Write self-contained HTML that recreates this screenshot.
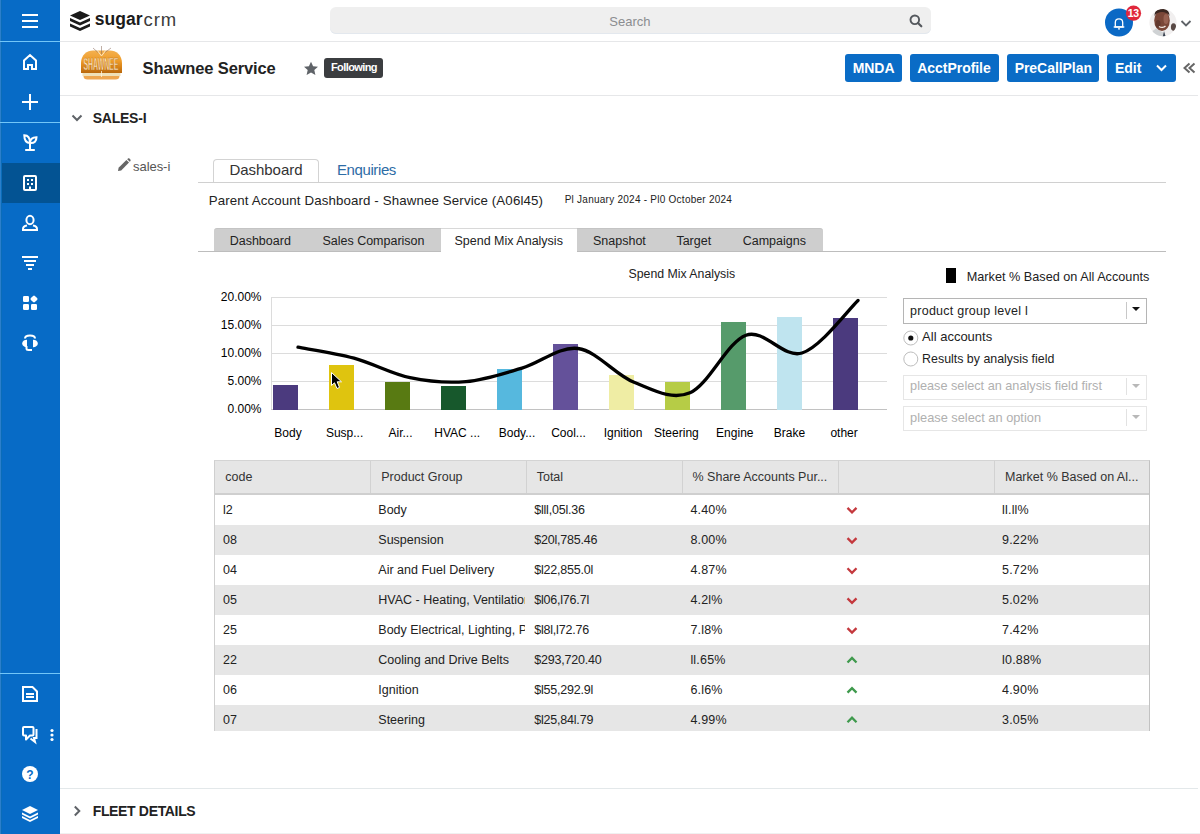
<!DOCTYPE html>
<html><head><meta charset="utf-8">
<style>
*{margin:0;padding:0;box-sizing:border-box}
html,body{width:1200px;height:834px;overflow:hidden;background:#fff;font-family:"Liberation Sans",sans-serif;color:#222;position:relative}
.a{position:absolute}
.t{position:absolute;white-space:nowrap;line-height:1}
</style></head><body>
<div class="a" style="left:0px;top:0px;width:60px;height:834px;background:#076bc6"></div>
<div class="a" style="left:0px;top:163px;width:60px;height:40px;background:#035393"></div>
<div class="a" style="left:0px;top:0px;width:1px;height:834px;background:#2b7fcb"></div>
<div class="a" style="left:1px;top:0px;width:1px;height:834px;background:#0a6cb8"></div>
<div class="a" style="left:0px;top:41px;width:60px;height:1px;background:#72c6f8"></div>
<div class="a" style="left:0px;top:122px;width:60px;height:1px;background:#72c6f8"></div>
<div class="a" style="left:0px;top:673px;width:60px;height:1px;background:#72c6f8"></div>
<svg class="a" style="left:0;top:0" width="60" height="834">
 <g stroke="#fff" stroke-width="2" fill="none" stroke-linecap="butt" stroke-linejoin="miter">
  <path d="M22,15H38M22,21H38M22,27H38"/>
  <path d="M24,69V60.5L30,55L36,60.5V69H32V65H28V69Z"/>
  <path d="M22,102H38M30,94V110"/>
  <path d="M30,150V143M25.2,150H34.8"/>
  <path d="M30,143C25.5,143 24.3,139.5 24.3,135.3C28,135.3 30,138 30,143Z"/>
  <path d="M30,143C30,139.5 32,137.3 36.5,137.3C36.5,141 34.5,143.5 30,143Z"/>
  <rect x="24" y="176" width="12" height="14" rx="1"/>
  <path d="M30,186.5V190"/>
  <ellipse cx="30" cy="220" rx="3.6" ry="4.2"/>
  <path d="M27,225.5C24,226 23,227.5 23,229V230H37V229C37,227.5 36,226 33,225.5"/>
  <path d="M22,257H38M24,261H36M26,265H34M28,269H32"/>
  <path d="M25,338.5C25,336.5 27,335.5 30,335.5C33,335.5 35,336.5 35,338.5"/>
  <path d="M26.5,346V348.5C26.5,349.5 27.5,350 28.5,350H32"/>
  <path d="M23,687H32.5L37,691.5V701H23Z"/>
  <path d="M26,694H34M26,697H34"/>
  <path d="M24,727H32.5Q33.5,727 33.5,728V734.5Q33.5,735.5 32.5,735.5H30L26,739.5V735.5H24Q23,735.5 23,734.5V728Q23,727 24,727Z" stroke-linejoin="round"/>
  <path d="M36.5,729V738H34L35,742L30.5,738.5"/>
 </g>
 <g fill="#fff">
  <rect x="27" y="179" width="2" height="2"/><rect x="31" y="179" width="2" height="2"/>
  <rect x="27" y="183" width="2" height="2"/><rect x="31" y="183" width="2" height="2"/>
  <rect x="23" y="296" width="6" height="6" rx="1.3"/>
  <path d="M33.1,295.9Q34,295 34.9,295.9L37.1,298.1Q38,299 37.1,299.9L34.9,302.1Q34,303 33.1,302.1L30.9,299.9Q30,299 30.9,298.1Z"/>
  <rect x="23" y="304" width="6" height="6" rx="1.3"/>
  <rect x="31" y="304" width="6" height="6" rx="1.3"/>
  <path d="M27,339.8V347.2C24,347.2 22.2,345.5 22.2,343.5C22.2,341.5 24,339.8 27,339.8Z"/>
  <path d="M33,339.8V347.2C36,347.2 37.8,345.5 37.8,343.5C37.8,341.5 36,339.8 33,339.8Z"/>
  <circle cx="52" cy="730.5" r="1.6"/><circle cx="52" cy="735" r="1.6"/><circle cx="52" cy="739.5" r="1.6"/>
  <circle cx="30" cy="774" r="8"/>
  <path d="M30,806L38,810L30,814L22,810Z"/>
  <path d="M22,812.5L30,816.5L38,812.5V814.5L30,818.5L22,814.5Z"/>
  <path d="M22,816L30,820L38,816V818L30,822L22,818Z"/>
 </g>
 <text x="30" y="778.5" font-family="Liberation Sans" font-weight="bold" font-size="12" fill="#076bc6" text-anchor="middle">?</text>
</svg>
<div class="a" style="left:60px;top:41px;width:1140px;height:1px;background:#e6e7e9"></div>
<svg class="a" style="left:68px;top:9px" width="26" height="24" viewBox="0 0 26 24">
 <path d="M12,2L22,6.5L12,11L2,6.5Z" fill="#1b1b1b"/>
 <path d="M2,9L12,13.5L22,9V12L12,16.5L2,12Z" fill="#1b1b1b"/>
 <path d="M2,14.5L12,19L22,14.5V17.5L12,22L2,17.5Z" fill="#1b1b1b"/>
</svg>
<div class="t" style="left:94.80px;top:11.39px;font-size:17.5px;color:#1b1b1b;font-weight:bold;letter-spacing:0px;">sugar</div>
<div class="t" style="left:143.50px;top:10.54px;font-size:18.5px;color:#3c3c3c;font-weight:normal;letter-spacing:0.9px;">crm</div>
<div class="a" style="left:330px;top:7px;width:601px;height:27px;background:#efefef;border-radius:6px;box-shadow:inset 0 -1px 0 #e3e8ee"></div>
<div class="t" style="left:609.30px;top:14.70px;font-size:13px;color:#8b8d90;font-weight:normal;letter-spacing:0px;">Search</div>
<svg class="a" style="left:907px;top:12px" width="18" height="18"><circle cx="7.8" cy="7.8" r="4.3" fill="none" stroke="#54585d" stroke-width="1.9"/><path d="M11,11L14.3,14.3" stroke="#54585d" stroke-width="2.2" stroke-linecap="round"/></svg>
<svg class="a" style="left:1100px;top:0" width="100" height="41">
 <circle cx="19" cy="22.5" r="14" fill="#0b69c5"/>
 <path d="M15.3,26.8V22.5C15.3,20.1 17,18.8 19,18.8C21,18.8 22.7,20.1 22.7,22.5V26.8Z" fill="none" stroke="#fff" stroke-width="1.3" stroke-linejoin="round"/>
 <path d="M14.2,27H23.8" stroke="#fff" stroke-width="1.3" stroke-linecap="round"/>
 <path d="M18,28.8H20" stroke="#fff" stroke-width="1.2"/>
 <circle cx="33.5" cy="13.2" r="7.6" fill="#e0283c"/>
 <text x="33.3" y="17" font-family="Liberation Sans" font-weight="bold" font-size="10.5" fill="#fff" text-anchor="middle" letter-spacing="-0.3">13</text>
 <defs><clipPath id="av"><circle cx="63" cy="22.7" r="13.6"/></clipPath></defs>
 <g clip-path="url(#av)">
  <rect x="48" y="8" width="30" height="30" fill="#f1efef"/>
  <ellipse cx="73.5" cy="27" rx="2.6" ry="3.8" fill="#3e2c27" opacity="0.85"/>
  <path d="M50,33L56,28.5L64,33L67,38H50Z" fill="#cfd2d4"/>
  <path d="M64,31L66,38H62.5Z" fill="#3a4250"/>
  <ellipse cx="62" cy="20.5" rx="7.8" ry="10.5" fill="#7a4738"/>
  <path d="M54.5,16C54.5,10.5 58,9 62,9C66,9 69.5,10.5 69.5,16C68,13 65,12 62,12C59,12 56,13 54.5,16Z" fill="#3a2620"/>
  <ellipse cx="66" cy="19" rx="2.5" ry="5" fill="#b07868" opacity="0.55"/>
  <ellipse cx="58" cy="24" rx="2.5" ry="4" fill="#4a2820" opacity="0.5"/>
  <path d="M59,26.5C61,27.8 64,27.5 65.5,26" stroke="#efe6e0" stroke-width="1.4" fill="none"/>
 </g>
 <path d="M81.5,21L86,25.5L90.5,21" fill="none" stroke="#5f6368" stroke-width="1.8"/>
</svg>
<div class="a" style="left:60px;top:95px;width:1138px;height:1px;background:#e6e7e9"></div>
<svg class="a" style="left:78px;top:44px" width="48" height="38" viewBox="0 0 48 38">
 <defs><linearGradient id="lg" x1="0" y1="0" x2="0" y2="1">
  <stop offset="0" stop-color="#f3b050"/><stop offset="0.45" stop-color="#ef9d2a"/><stop offset="0.72" stop-color="#d98418"/><stop offset="1" stop-color="#b9670c"/></linearGradient></defs>
 <path d="M3,29V19C3,11 9,6.5 15,6.5H32C38,6.5 44,11 44,19V29Z" fill="url(#lg)"/>
 <path d="M4.5,29H42.5V32H4.5Z" fill="#efe0b8"/>
 <path d="M5.5,32H41.5C41.5,34.5 40,35.5 37.5,35.5H9.5C7,35.5 5.5,34.5 5.5,32Z" fill="#eea650"/>
 <path d="M15,4L20,8.5M33,4L27,8.5M23.5,2V10" stroke="#8a6a5a" stroke-width="0.9" fill="none" opacity="0.6"/>
 <path d="M19,6L23.5,12L28,6" stroke="#fbe7c6" stroke-width="1" fill="none"/>
 <text x="0" y="0" font-family="Liberation Sans" font-size="17" font-weight="bold" fill="#fde4bd" stroke="#b87020" stroke-width="0.5" transform="translate(5.5,25.5) scale(0.405,1)">SHAWNEE</text>
 <path d="M23.5,27V33" stroke="#fff3dc" stroke-width="0.8"/>
</svg>
<div class="t" style="left:142.60px;top:59.83px;font-size:16.5px;color:#222;font-weight:bold;letter-spacing:-0.12px;">Shawnee Service</div>
<svg class="a" style="left:303px;top:61px" width="16" height="15" viewBox="0 0 16 15"><path d="M8,0.8L10.1,5.3L15,5.8L11.3,9.1L12.4,14L8,11.5L3.6,14L4.7,9.1L1,5.8L5.9,5.3Z" fill="#5f6368"/></svg>
<div class="a" style="left:324px;top:58px;width:59px;height:20px;background:#3b3d40;border-radius:3px"></div>
<div class="t" style="left:331.00px;top:62.39px;font-size:11px;color:#fff;font-weight:bold;letter-spacing:-0.6px;">Following</div>
<div class="a" style="left:845px;top:54px;width:57px;height:28px;background:#0a6cc6;border-radius:3px"></div>
<div class="t" style="left:852.70px;top:61.05px;font-size:14px;color:#fff;font-weight:bold;letter-spacing:-0.05px;">MNDA</div>
<div class="a" style="left:910px;top:54px;width:89px;height:28px;background:#0a6cc6;border-radius:3px"></div>
<div class="t" style="left:917.30px;top:61.05px;font-size:14px;color:#fff;font-weight:bold;letter-spacing:-0.05px;">AcctProfile</div>
<div class="a" style="left:1007px;top:54px;width:92px;height:28px;background:#0a6cc6;border-radius:3px"></div>
<div class="t" style="left:1014.70px;top:61.05px;font-size:14px;color:#fff;font-weight:bold;letter-spacing:-0.05px;">PreCallPlan</div>
<div class="a" style="left:1107px;top:54px;width:69px;height:28px;background:#0a6cc6;border-radius:3px"></div>
<div class="t" style="left:1115.00px;top:61.05px;font-size:14px;color:#fff;font-weight:bold;letter-spacing:-0.05px;">Edit</div>
<svg class="a" style="left:1150px;top:60px" width="50" height="20">
 <path d="M7,5.5L11.5,10L16,5.5" fill="none" stroke="#fff" stroke-width="2"/>
 <path d="M39.5,3.5L34.5,8L39.5,12.5M44.5,3.5L39.5,8L44.5,12.5" fill="none" stroke="#666" stroke-width="2"/>
</svg>
<svg class="a" style="left:70px;top:112px" width="14" height="12"><path d="M2.5,3.5L7,8L11.5,3.5" fill="none" stroke="#5f6368" stroke-width="2"/></svg>
<div class="t" style="left:92.70px;top:110.85px;font-size:14px;color:#222;font-weight:bold;letter-spacing:-0.23px;">SALES-I</div>
<svg class="a" style="left:117px;top:158px" width="14" height="14" viewBox="0 0 14 14"><path d="M1,13L1.6,9.8L9.4,2L12,4.6L4.2,12.4Z" fill="#666"/><path d="M10.2,1.2L11,0.6C11.5,0.2 12,0.2 12.4,0.6L13.4,1.6C13.8,2 13.8,2.5 13.4,3L12.8,3.8Z" fill="#666"/></svg>
<div class="t" style="left:133.00px;top:160.25px;font-size:13px;color:#555;font-weight:normal;letter-spacing:-0.05px;">sales-i</div>
<div class="a" style="left:213px;top:159px;width:106px;height:24px;border:1px solid #d3d3d3;border-bottom:none;border-radius:4px 4px 0 0;background:#fff"></div>
<div class="a" style="left:198px;top:182px;width:968px;height:1px;background:#d0d0d0"></div>
<div class="t" style="left:229.50px;top:161.55px;font-size:15px;color:#333;font-weight:normal;letter-spacing:-0.05px;">Dashboard</div>
<div class="t" style="left:337.00px;top:161.55px;font-size:15px;color:#2d6ca5;font-weight:normal;letter-spacing:-0.4px;">Enquiries</div>
<div class="t" style="left:208.75px;top:193.74px;font-size:13.3px;color:#222;font-weight:normal;letter-spacing:0.12px;">Parent Account Dashboard - Shawnee Service (A06l45)</div>
<div class="t" style="left:564.70px;top:194.53px;font-size:10px;color:#222;font-weight:normal;letter-spacing:0.25px;">Pl January 2024 - Pl0 October 2024</div>
<div class="a" style="left:214px;top:228px;width:609px;height:23px;background:#cecece;border-top:1px solid #c4c4c4;border-radius:3px 3px 0 0"></div>
<div class="a" style="left:441px;top:228px;width:136px;height:24px;background:#fff;border-top:1px solid #d8d8d8"></div>
<div class="a" style="left:198px;top:251px;width:243px;height:1px;background:#bdbdbd"></div>
<div class="a" style="left:577px;top:251px;width:589px;height:1px;background:#bdbdbd"></div>
<div class="t" style="left:229.70px;top:234.82px;font-size:12.5px;color:#222;font-weight:normal;letter-spacing:0px;">Dashboard</div>
<div class="t" style="left:322.40px;top:234.82px;font-size:12.5px;color:#222;font-weight:normal;letter-spacing:0px;">Sales Comparison</div>
<div class="t" style="left:454.50px;top:234.82px;font-size:12.5px;color:#222;font-weight:normal;letter-spacing:0px;">Spend Mix Analysis</div>
<div class="t" style="left:593.00px;top:234.82px;font-size:12.5px;color:#222;font-weight:normal;letter-spacing:0px;">Snapshot</div>
<div class="t" style="left:676.40px;top:234.82px;font-size:12.5px;color:#222;font-weight:normal;letter-spacing:0px;">Target</div>
<div class="t" style="left:742.70px;top:234.82px;font-size:12.5px;color:#222;font-weight:normal;letter-spacing:0px;">Campaigns</div>
<div class="t" style="left:628.50px;top:267.69px;font-size:12.3px;color:#222;font-weight:normal;letter-spacing:0px;">Spend Mix Analysis</div>
<svg class="a" style="left:0;top:0" width="1200" height="834"><g stroke="#dcdcdc" stroke-width="1"><line x1="271" y1="297.5" x2="887" y2="297.5"/><line x1="271" y1="325.5" x2="887" y2="325.5"/><line x1="271" y1="353.5" x2="887" y2="353.5"/><line x1="271" y1="381.5" x2="887" y2="381.5"/><line x1="271.5" y1="297" x2="271.5" y2="410"/></g><line x1="271" y1="409.5" x2="887" y2="409.5" stroke="#c2c2c2"/><rect x="273" y="385" width="25" height="25" fill="#4b3a7e"/><rect x="329" y="365" width="25" height="45" fill="#dfc40f"/><rect x="385" y="382" width="25" height="28" fill="#587a12"/><rect x="441" y="386" width="25" height="24" fill="#17582c"/><rect x="497" y="369" width="25" height="41" fill="#56b8de"/><rect x="553" y="344" width="25" height="66" fill="#64519a"/><rect x="609" y="375" width="25" height="35" fill="#efeda4"/><rect x="665" y="382" width="25" height="28" fill="#b6cc46"/><rect x="721" y="322" width="25" height="88" fill="#569b6b"/><rect x="777" y="317" width="25" height="93" fill="#bfe4ef"/><rect x="833" y="318" width="25" height="92" fill="#4b3a7e"/><path d="M298,347.2 C307.3,349.0 335.3,353.0 354,358.1 C372.7,363.2 391.3,373.8 410,377.7 C428.7,381.6 447.3,383.2 466,381.6 C484.7,380.0 503.3,373.6 522,368.1 C540.7,362.6 559.3,346.1 578,348.5 C596.7,350.9 615.3,374.9 634,382.3 C652.7,389.7 671.3,400.7 690,392.8 C708.7,384.9 727.3,341.8 746,335.2 C764.7,328.6 783.3,358.8 802,353 C820.7,347.2 848.7,309.2 858,300.5" fill="none" stroke="#000" stroke-width="3.3" stroke-linecap="round"/><path d="M331.5,372.5V385.5L334.5,382.8L337,388.5L339.5,387.4L337.2,381.8H341.5Z" fill="#000" stroke="#fff" stroke-width="1" stroke-linejoin="round"/></svg>
<div class="t" style="left:-38.50px;top:290.84px;width:300px;text-align:right;font-size:12px;color:#000;font-weight:normal;letter-spacing:0px">20.00%</div>
<div class="t" style="left:-38.50px;top:318.84px;width:300px;text-align:right;font-size:12px;color:#000;font-weight:normal;letter-spacing:0px">15.00%</div>
<div class="t" style="left:-38.50px;top:346.84px;width:300px;text-align:right;font-size:12px;color:#000;font-weight:normal;letter-spacing:0px">10.00%</div>
<div class="t" style="left:-38.50px;top:374.84px;width:300px;text-align:right;font-size:12px;color:#000;font-weight:normal;letter-spacing:0px">5.00%</div>
<div class="t" style="left:-38.50px;top:402.84px;width:300px;text-align:right;font-size:12px;color:#000;font-weight:normal;letter-spacing:0px">0.00%</div>
<div class="t" style="left:188.00px;top:427.34px;width:200px;text-align:center;font-size:12px;color:#000;font-weight:normal;letter-spacing:0px">Body</div>
<div class="t" style="left:244.60px;top:427.34px;width:200px;text-align:center;font-size:12px;color:#000;font-weight:normal;letter-spacing:0px">Susp...</div>
<div class="t" style="left:300.50px;top:427.34px;width:200px;text-align:center;font-size:12px;color:#000;font-weight:normal;letter-spacing:0px">Air...</div>
<div class="t" style="left:357.20px;top:427.34px;width:200px;text-align:center;font-size:12px;color:#000;font-weight:normal;letter-spacing:0px">HVAC ...</div>
<div class="t" style="left:417.00px;top:427.34px;width:200px;text-align:center;font-size:12px;color:#000;font-weight:normal;letter-spacing:0px">Body...</div>
<div class="t" style="left:468.50px;top:427.34px;width:200px;text-align:center;font-size:12px;color:#000;font-weight:normal;letter-spacing:0px">Cool...</div>
<div class="t" style="left:523.00px;top:427.34px;width:200px;text-align:center;font-size:12px;color:#000;font-weight:normal;letter-spacing:0px">Ignition</div>
<div class="t" style="left:576.40px;top:427.34px;width:200px;text-align:center;font-size:12px;color:#000;font-weight:normal;letter-spacing:0px">Steering</div>
<div class="t" style="left:634.80px;top:427.34px;width:200px;text-align:center;font-size:12px;color:#000;font-weight:normal;letter-spacing:0px">Engine</div>
<div class="t" style="left:689.50px;top:427.34px;width:200px;text-align:center;font-size:12px;color:#000;font-weight:normal;letter-spacing:0px">Brake</div>
<div class="t" style="left:744.10px;top:427.34px;width:200px;text-align:center;font-size:12px;color:#000;font-weight:normal;letter-spacing:0px">other</div>
<div class="a" style="left:946px;top:268px;width:10px;height:15px;background:#000"></div>
<div class="t" style="left:966.70px;top:270.55px;font-size:12.7px;color:#222;font-weight:normal;letter-spacing:0px;">Market % Based on All Accounts</div>
<div class="a" style="left:903px;top:298px;width:244px;height:26px;border:1px solid #b5b5b5;background:#fff"></div>
<div class="t" style="left:910.10px;top:304.62px;font-size:12.5px;color:#222;font-weight:normal;letter-spacing:0.25px;">product group level l</div>
<div class="a" style="left:1126px;top:302px;width:1px;height:17px;background:#c8c8c8"></div>
<svg class="a" style="left:1132px;top:307px" width="8" height="5"><path d="M0,0L8,0L4,4Z" fill="#111"/></svg>
<svg class="a" style="left:900px;top:328px" width="22" height="42">
 <circle cx="10.8" cy="10" r="7" fill="#fff" stroke="#bdbdbd" stroke-width="1"/>
 <circle cx="10.8" cy="10" r="2.6" fill="#111"/>
 <circle cx="10.8" cy="31" r="7" fill="#fff" stroke="#bdbdbd" stroke-width="1"/>
</svg>
<div class="t" style="left:922.10px;top:330.30px;font-size:13px;color:#222;font-weight:normal;letter-spacing:0px;">All accounts</div>
<div class="t" style="left:922.10px;top:352.70px;font-size:12.4px;color:#222;font-weight:normal;letter-spacing:0px;">Results by analysis field</div>
<div class="a" style="left:903px;top:375px;width:244px;height:25px;border:1px solid #e6e6e6"></div>
<div class="t" style="left:910.10px;top:380.45px;font-size:12.7px;color:#b0b0b0;font-weight:normal;letter-spacing:0px;">please select an analysis field first</div>
<div class="a" style="left:1126px;top:378px;width:1px;height:17px;background:#e2e2e2"></div>
<svg class="a" style="left:1132px;top:384px" width="8" height="5"><path d="M0,0L8,0L4,4Z" fill="#b8b8b8"/></svg>
<div class="a" style="left:903px;top:406px;width:244px;height:25px;border:1px solid #e6e6e6"></div>
<div class="t" style="left:910.10px;top:412.36px;font-size:12.8px;color:#b0b0b0;font-weight:normal;letter-spacing:0px;">please select an option</div>
<div class="a" style="left:1126px;top:409px;width:1px;height:17px;background:#e2e2e2"></div>
<svg class="a" style="left:1132px;top:415px" width="8" height="5"><path d="M0,0L8,0L4,4Z" fill="#b8b8b8"/></svg>
<div class="a" style="left:214px;top:460px;width:936px;height:271px;border-left:1px solid #cfcfcf;border-right:1px solid #c2c2c2;border-top:1px solid #d4d4d4"></div>
<div class="a" style="left:215px;top:461px;width:934px;height:32px;background:#e6e6e6"></div>
<div class="a" style="left:215px;top:493px;width:934px;height:2px;background:#cfcfcf"></div>
<div class="a" style="left:370px;top:461px;width:1px;height:32px;background:#d2d2d2"></div>
<div class="a" style="left:526px;top:461px;width:1px;height:32px;background:#d2d2d2"></div>
<div class="a" style="left:682px;top:461px;width:1px;height:32px;background:#d2d2d2"></div>
<div class="a" style="left:838px;top:461px;width:1px;height:32px;background:#d2d2d2"></div>
<div class="a" style="left:994px;top:461px;width:1px;height:32px;background:#d2d2d2"></div>
<div class="t" style="left:225.30px;top:470.62px;font-size:12.5px;color:#333;font-weight:normal;letter-spacing:0px;">code</div>
<div class="t" style="left:381.25px;top:470.62px;font-size:12.5px;color:#333;font-weight:normal;letter-spacing:0px;">Product Group</div>
<div class="t" style="left:536.70px;top:470.62px;font-size:12.5px;color:#333;font-weight:normal;letter-spacing:0px;">Total</div>
<div class="t" style="left:692.50px;top:470.62px;font-size:12.5px;color:#333;font-weight:normal;letter-spacing:0px;">% Share Accounts Pur...</div>
<div class="t" style="left:1005.00px;top:470.62px;font-size:12.5px;color:#333;font-weight:normal;letter-spacing:0px;">Market % Based on Al...</div>
<div class="t" style="left:223.00px;top:503.82px;font-size:12.5px;color:#222;font-weight:normal;letter-spacing:0px;">l2</div>
<div class="t" style="left:378.3px;top:503.82px;width:147px;overflow:hidden;padding-bottom:4px;font-size:12.5px;color:#222">Body</div>
<div class="t" style="left:534.20px;top:503.82px;font-size:12.5px;color:#222;font-weight:normal;letter-spacing:-0.2px;">$lll,05l.36</div>
<div class="t" style="left:690.40px;top:503.82px;font-size:12.5px;color:#222;font-weight:normal;letter-spacing:0.2px;">4.40%</div>
<div class="t" style="left:1002.00px;top:503.82px;font-size:12.5px;color:#222;font-weight:normal;letter-spacing:0.2px;">ll.ll%</div>
<div class="a" style="left:215px;top:525px;width:934px;height:30px;background:#e6e6e6"></div>
<div class="t" style="left:223.00px;top:534.02px;font-size:12.5px;color:#222;font-weight:normal;letter-spacing:0px;">08</div>
<div class="t" style="left:378.3px;top:534.02px;width:147px;overflow:hidden;padding-bottom:4px;font-size:12.5px;color:#222">Suspension</div>
<div class="t" style="left:534.20px;top:534.02px;font-size:12.5px;color:#222;font-weight:normal;letter-spacing:-0.2px;">$20l,785.46</div>
<div class="t" style="left:690.40px;top:534.02px;font-size:12.5px;color:#222;font-weight:normal;letter-spacing:0.2px;">8.00%</div>
<div class="t" style="left:1002.00px;top:534.02px;font-size:12.5px;color:#222;font-weight:normal;letter-spacing:0.2px;">9.22%</div>
<div class="t" style="left:223.00px;top:564.22px;font-size:12.5px;color:#222;font-weight:normal;letter-spacing:0px;">04</div>
<div class="t" style="left:378.3px;top:564.22px;width:147px;overflow:hidden;padding-bottom:4px;font-size:12.5px;color:#222">Air and Fuel Delivery</div>
<div class="t" style="left:534.20px;top:564.22px;font-size:12.5px;color:#222;font-weight:normal;letter-spacing:-0.2px;">$l22,855.0l</div>
<div class="t" style="left:690.40px;top:564.22px;font-size:12.5px;color:#222;font-weight:normal;letter-spacing:0.2px;">4.87%</div>
<div class="t" style="left:1002.00px;top:564.22px;font-size:12.5px;color:#222;font-weight:normal;letter-spacing:0.2px;">5.72%</div>
<div class="a" style="left:215px;top:585px;width:934px;height:30px;background:#e6e6e6"></div>
<div class="t" style="left:223.00px;top:594.32px;font-size:12.5px;color:#222;font-weight:normal;letter-spacing:0px;">05</div>
<div class="t" style="left:378.3px;top:594.32px;width:147px;overflow:hidden;padding-bottom:4px;font-size:12.5px;color:#222">HVAC - Heating, Ventilation</div>
<div class="t" style="left:534.20px;top:594.32px;font-size:12.5px;color:#222;font-weight:normal;letter-spacing:-0.2px;">$l06,l76.7l</div>
<div class="t" style="left:690.40px;top:594.32px;font-size:12.5px;color:#222;font-weight:normal;letter-spacing:0.2px;">4.2l%</div>
<div class="t" style="left:1002.00px;top:594.32px;font-size:12.5px;color:#222;font-weight:normal;letter-spacing:0.2px;">5.02%</div>
<div class="t" style="left:223.00px;top:624.02px;font-size:12.5px;color:#222;font-weight:normal;letter-spacing:0px;">25</div>
<div class="t" style="left:378.3px;top:624.02px;width:147px;overflow:hidden;padding-bottom:4px;font-size:12.5px;color:#222">Body Electrical, Lighting, Power</div>
<div class="t" style="left:534.20px;top:624.02px;font-size:12.5px;color:#222;font-weight:normal;letter-spacing:-0.2px;">$l8l,l72.76</div>
<div class="t" style="left:690.40px;top:624.02px;font-size:12.5px;color:#222;font-weight:normal;letter-spacing:0.2px;">7.l8%</div>
<div class="t" style="left:1002.00px;top:624.02px;font-size:12.5px;color:#222;font-weight:normal;letter-spacing:0.2px;">7.42%</div>
<div class="a" style="left:215px;top:645px;width:934px;height:30px;background:#e6e6e6"></div>
<div class="t" style="left:223.00px;top:653.92px;font-size:12.5px;color:#222;font-weight:normal;letter-spacing:0px;">22</div>
<div class="t" style="left:378.3px;top:653.92px;width:147px;overflow:hidden;padding-bottom:4px;font-size:12.5px;color:#222">Cooling and Drive Belts</div>
<div class="t" style="left:534.20px;top:653.92px;font-size:12.5px;color:#222;font-weight:normal;letter-spacing:-0.2px;">$293,720.40</div>
<div class="t" style="left:690.40px;top:653.92px;font-size:12.5px;color:#222;font-weight:normal;letter-spacing:0.2px;">ll.65%</div>
<div class="t" style="left:1002.00px;top:653.92px;font-size:12.5px;color:#222;font-weight:normal;letter-spacing:0.2px;">l0.88%</div>
<div class="t" style="left:223.00px;top:684.02px;font-size:12.5px;color:#222;font-weight:normal;letter-spacing:0px;">06</div>
<div class="t" style="left:378.3px;top:684.02px;width:147px;overflow:hidden;padding-bottom:4px;font-size:12.5px;color:#222">Ignition</div>
<div class="t" style="left:534.20px;top:684.02px;font-size:12.5px;color:#222;font-weight:normal;letter-spacing:-0.2px;">$l55,292.9l</div>
<div class="t" style="left:690.40px;top:684.02px;font-size:12.5px;color:#222;font-weight:normal;letter-spacing:0.2px;">6.l6%</div>
<div class="t" style="left:1002.00px;top:684.02px;font-size:12.5px;color:#222;font-weight:normal;letter-spacing:0.2px;">4.90%</div>
<div class="a" style="left:215px;top:705px;width:934px;height:26px;background:#e6e6e6"></div>
<div class="t" style="left:223.00px;top:713.62px;font-size:12.5px;color:#222;font-weight:normal;letter-spacing:0px;">07</div>
<div class="t" style="left:378.3px;top:713.62px;width:147px;overflow:hidden;padding-bottom:4px;font-size:12.5px;color:#222">Steering</div>
<div class="t" style="left:534.20px;top:713.62px;font-size:12.5px;color:#222;font-weight:normal;letter-spacing:-0.2px;">$l25,84l.79</div>
<div class="t" style="left:690.40px;top:713.62px;font-size:12.5px;color:#222;font-weight:normal;letter-spacing:0.2px;">4.99%</div>
<div class="t" style="left:1002.00px;top:713.62px;font-size:12.5px;color:#222;font-weight:normal;letter-spacing:0.2px;">3.05%</div>
<svg class="a" style="left:0;top:0" width="1200" height="834"><path d="M847.5,507.9L852,512.4L856.5,507.9" fill="none" stroke="#c4383d" stroke-width="2.3"/><path d="M847.5,538.1L852,542.6L856.5,538.1" fill="none" stroke="#c4383d" stroke-width="2.3"/><path d="M847.5,568.3L852,572.8L856.5,568.3" fill="none" stroke="#c4383d" stroke-width="2.3"/><path d="M847.5,598.4L852,602.9L856.5,598.4" fill="none" stroke="#c4383d" stroke-width="2.3"/><path d="M847.5,628.1L852,632.6L856.5,628.1" fill="none" stroke="#c4383d" stroke-width="2.3"/><path d="M847.5,662.5L852,658.0L856.5,662.5" fill="none" stroke="#3f9a4d" stroke-width="2.3"/><path d="M847.5,692.6L852,688.1L856.5,692.6" fill="none" stroke="#3f9a4d" stroke-width="2.3"/><path d="M847.5,722.2L852,717.7L856.5,722.2" fill="none" stroke="#3f9a4d" stroke-width="2.3"/></svg>
<div class="a" style="left:60px;top:788px;width:1138px;height:1px;background:#e3e8ea"></div>
<div class="a" style="left:60px;top:833px;width:1140px;height:1px;background:#f0f0f0"></div>
<svg class="a" style="left:70px;top:804px" width="14" height="14"><path d="M4.8,2.5L9.3,7L4.8,11.5" fill="none" stroke="#5f6368" stroke-width="2"/></svg>
<div class="t" style="left:92.70px;top:804.05px;font-size:14px;color:#222;font-weight:bold;letter-spacing:-0.34px;">FLEET DETAILS</div>
</body></html>
